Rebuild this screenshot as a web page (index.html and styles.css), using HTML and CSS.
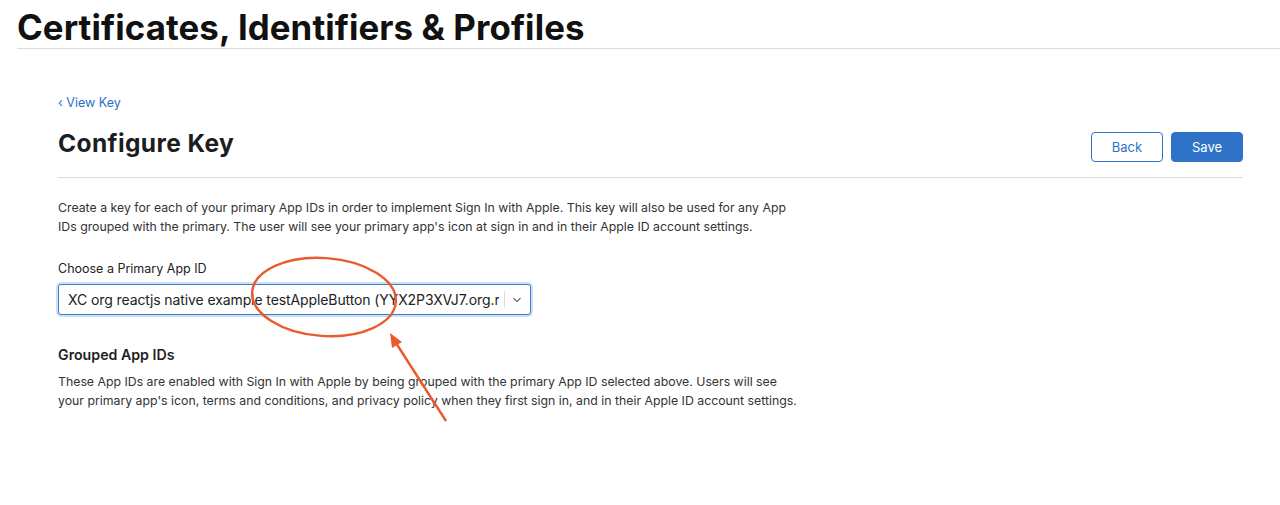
FILE: index.html
```html
<!DOCTYPE html>
<html>
<head>
<meta charset="utf-8">
<link rel="stylesheet" href="styles.css">
</head>
<body>
<header class="top">
  <h1 class="site-title">Certificates, Identifiers &amp; Profiles</h1>
</header>
<main class="main">
  <a class="back-link" href="#">‹ View Key</a>
  <div class="head-row">
    <h2 class="page-title">Configure Key</h2>
    <div class="actions">
      <button class="btn btn-outline">Back</button>
      <button class="btn btn-primary">Save</button>
    </div>
  </div>
  <p class="desc">Create a key for each of your primary App IDs in order to implement Sign In with Apple. This key will also be used for any App IDs grouped with the primary. The user will see your primary app's icon at sign in and in their Apple ID account settings.</p>
  <label class="field-label">Choose a Primary App ID</label>
  <div class="select">
    <span class="select-text">XC org reactjs native example testAppleButton (YYX2P3XVJ7.org.reactjs.native.example.testAppleButton)</span>
    <span class="select-sep"></span>
    <svg class="select-caret" width="10" height="6" viewBox="0 0 10 6"><path d="M1.5 1.2 L5 4.6 L8.5 1.2" fill="none" stroke="#555" stroke-width="1.1"/></svg>
  </div>
  <h3 class="sub-title">Grouped App IDs</h3>
  <p class="desc desc2">These App IDs are enabled with Sign In with Apple by being grouped with the primary App ID selected above. Users will see your primary app's icon, terms and conditions, and privacy policy when they first sign in, and in their Apple ID account settings.</p>
</main>
<svg class="annot" width="1280" height="505" viewBox="0 0 1280 505">
  <ellipse cx="324" cy="297" rx="72" ry="39" fill="none" stroke="#ea5a2f" stroke-width="2.4" transform="rotate(4 324 297)"/>
  <line x1="446" y1="421" x2="396" y2="343" stroke="#ea5a2f" stroke-width="2.4"/>
  <polygon points="390,333 402,342 392,348" fill="#ea5a2f"/>
</svg>
</body>
</html>
```
FILE: styles.css
```css
* { box-sizing: border-box; }
body {
  margin: 0;
  background: #fff;
  font-family: Inter, "Liberation Sans", sans-serif;
  color: #333;
  width: 1280px;
  height: 505px;
  overflow: hidden;
  position: relative;
}
.top {
  margin-left: 17px;
  border-bottom: 1px solid #dcdcdc;
  height: 49px;
}
.site-title {
  margin: 0;
  padding-top: 7px;
  font-size: 34.8px;
  font-weight: 700;
  color: #111;
  letter-spacing: 0.1px;
  line-height: 40px;
}
.main {
  padding: 0 37px 0 58px;
}
.back-link {
  display: block;
  margin-top: 46px;
  font-size: 12.5px;
  color: #2b6fc5;
  text-decoration: none;
  line-height: 16px;
}
.head-row {
  display: flex;
  justify-content: space-between;
  align-items: flex-start;
  margin-top: 17px;
  height: 50px;
  border-bottom: 1px solid #dcdcdc;
}
.page-title {
  margin: 0;
  font-size: 24.5px;
  font-weight: 700;
  color: #1d1d1f;
  line-height: 30px;
  letter-spacing: 0.4px;
}
.actions {
  display: flex;
  gap: 8px;
  padding-top: 4px;
}
.btn {
  width: 72px;
  height: 30px;
  border-radius: 4px;
  font-family: Inter, "Liberation Sans", sans-serif;
  font-size: 13px;
  cursor: pointer;
}
.btn-outline {
  background: #fff;
  border: 1px solid #2f73c8;
  color: #2f73c8;
}
.btn-primary {
  background: #2f73c8;
  border: 1px solid #2f73c8;
  color: #fff;
}
.desc {
  margin: 20px 0 0 0;
  max-width: 745px;
  font-size: 12.3px;
  line-height: 19px;
  color: #333;
}
.field-label {
  display: block;
  margin-top: 25px;
  font-size: 12.5px;
  line-height: 16px;
  color: #222;
}
.select {
  margin-top: 7px;
  width: 473px;
  height: 31px;
  border: 1px solid #3a7ad0;
  border-radius: 3px;
  box-shadow: 0 0 0 2px #cfe0f5;
  display: flex;
  align-items: center;
  padding-left: 9px;
  background: #fff;
}
.select-text {
  flex: 1;
  white-space: nowrap;
  overflow: hidden;
  font-size: 14px;
  color: #222;
  letter-spacing: -0.1px;
}
.select-sep {
  width: 1px;
  height: 17px;
  background: #ddd;
  margin-left: 5px;
}
.select-caret {
  margin: 0 8px 0 7px;
}
.sub-title {
  margin: 30px 0 0 0;
  font-size: 14.2px;
  font-weight: 600;
  color: #1d1d1f;
  line-height: 20px;
}
.desc2 {
  margin-top: 7px;
}
.annot {
  position: absolute;
  left: 0;
  top: 0;
  pointer-events: none;
}
```
